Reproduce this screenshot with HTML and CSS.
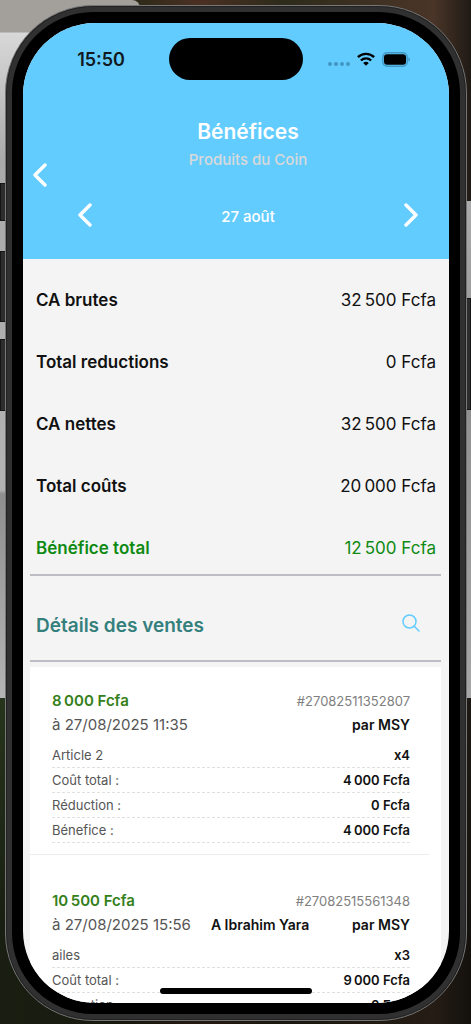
FILE: index.html
```html
<!DOCTYPE html>
<html lang="fr">
<head>
<meta charset="utf-8">
<meta name="viewport" content="width=device-width, initial-scale=1">
<title>Bénéfices</title>
<link rel="stylesheet" href="styles.css">
</head>
<body>
<div class="desktop">
  <div class="window window-left"></div>
  <div class="window window-right"></div>
  <span class="key key-action"></span>
  <span class="key key-up"></span>
  <span class="key key-down"></span>
  <span class="key key-power"></span>
  <div class="phone">
    <div class="screen">
      <header class="header">
        <div class="status">
          <span class="time">15:50</span>
          <span class="island"></span>
          <span class="signals">
            <svg width="22" height="18" viewBox="0 0 22 18" fill="#4197c2"><circle cx="2" cy="14" r="2"/><circle cx="8" cy="14" r="2"/><circle cx="14" cy="14" r="2"/><circle cx="20" cy="14" r="2"/></svg>
            <svg width="18" height="14" viewBox="0 0 18 14" fill="none" stroke="#000" stroke-width="2.4"><path d="M.9 5.2a11.6 11.6 0 0 1 16.2 0"/><path d="M3.9 8.5a7.3 7.3 0 0 1 10.2 0"/><path d="M9 13.8 6.2 11a4 4 0 0 1 5.6 0z" fill="#000" stroke="none"/></svg>
            <svg width="28" height="15" viewBox="0 0 28 15"><rect x=".8" y=".8" width="24.4" height="13.4" rx="4.4" fill="none" stroke="#4197c2" stroke-width="1.4"/><rect x="2" y="2.2" width="22" height="10.6" rx="3"/><path d="M26.4 5.2q1.6.8 1.6 2.3t-1.6 2.3z" fill="#4197c2"/></svg>
          </span>
        </div>
        <div class="heading">
          <button class="icon-button back" aria-label="Retour"><svg width="14" height="24" viewBox="0 0 14 24"><path d="M12 2 2 12l10 10"/></svg></button>
          <div class="heading-main">
            <h1 class="title">Bénéfices</h1>
            <p class="shop">Produits du Coin</p>
            <nav class="days">
              <button class="icon-button" aria-label="Jour précédent"><svg width="14" height="24" viewBox="0 0 14 24"><path d="M12 2 2 12l10 10"/></svg></button>
              <span class="day">27 août</span>
              <button class="icon-button" aria-label="Jour suivant"><svg width="14" height="24" viewBox="0 0 14 24"><path d="m2 2 10 10L2 22"/></svg></button>
            </nav>
          </div>
        </div>
      </header>
      <main class="content">
        <dl class="summary">
          <div class="line"><dt>CA brutes</dt><dd>32&#8239;500 Fcfa</dd></div>
          <div class="line"><dt>Total reductions</dt><dd>0 Fcfa</dd></div>
          <div class="line"><dt>CA nettes</dt><dd>32&#8239;500 Fcfa</dd></div>
          <div class="line"><dt>Total coûts</dt><dd>20&#8239;000 Fcfa</dd></div>
          <div class="line profit"><dt>Bénéfice total</dt><dd>12&#8239;500 Fcfa</dd></div>
        </dl>
        <div class="details-bar">
          <h2 class="details-title">Détails des ventes</h2>
          <button class="icon-button search" aria-label="Rechercher"><svg width="18" height="18" viewBox="0 0 18 18"><circle cx="7.5" cy="7.5" r="6.5"/><path d="m12 12 5 5"/></svg></button>
        </div>
        <div class="sales">
          <article class="sale">
            <div class="sale-row"><strong class="amount">8&#8239;000 Fcfa</strong><span class="number">#27082511352807</span></div>
            <div class="sale-row"><span class="date">à 27/08/2025 11:35</span><strong class="seller">par MSY</strong></div>
            <dl class="items">
              <div class="item"><dt>Article 2</dt><dd>x4</dd></div>
              <div class="item"><dt>Coût total :</dt><dd>4&#8239;000 Fcfa</dd></div>
              <div class="item"><dt>Réduction :</dt><dd>0 Fcfa</dd></div>
              <div class="item"><dt>Bénefice :</dt><dd>4&#8239;000 Fcfa</dd></div>
            </dl>
          </article>
          <article class="sale">
            <div class="sale-row"><strong class="amount">10&#8239;500 Fcfa</strong><span class="number">#27082515561348</span></div>
            <div class="sale-row"><span class="date">à 27/08/2025 15:56</span><strong class="client">A Ibrahim Yara</strong><strong class="seller">par MSY</strong></div>
            <dl class="items">
              <div class="item"><dt>ailes</dt><dd>x3</dd></div>
              <div class="item"><dt>Coût total :</dt><dd>9&#8239;000 Fcfa</dd></div>
              <div class="item"><dt>Réduction :</dt><dd>0 Fcfa</dd></div>
            </dl>
          </article>
        </div>
      </main>
      <span class="home"></span>
    </div>
  </div>
</div>
</body>
</html>
```
FILE: styles.css
```css
* { box-sizing: border-box; }
body, h1, h2, p, dl, dd { margin: 0; }
body { font-family: Inter, "Liberation Sans", sans-serif; color: #111; }

.desktop {
  position: relative;
  height: 100vh;
  padding: 5px 4px 3px 5px;
  overflow: hidden;
  background:
    linear-gradient(#0000 60%, #0c0b0899 90%),
    linear-gradient(90deg, #2c3d20, #2b2a18 28%, #4b3022 42%, #2d2b1b 60%, #4a3528 92%, #1f1a15);
}
.window { position: absolute; background: #aaa; }
.window-left {
  top: 0; left: 0; width: 140px; height: 698px;
  border-radius: 0 8px 0 0;
  background: linear-gradient(#a3a09c 0 32px, #d8d8d8 33px, #aaa 160px, #b3b3b3 490px, #8f8f8f 494px, #b4b4b4);
}
.window-right { top: 201px; right: 0; width: 30px; height: 497px; background: linear-gradient(#aaa, #8f8f8f 40%, #a6a6a6); }

.key { position: absolute; width: 8px; background: #2d2d2d; border: 1px solid #151515; }
.key-action { left: 0; top: 183px; height: 38px; }
.key-up { left: 0; top: 251px; height: 71px; }
.key-down { left: 0; top: 339px; height: 72px; }
.key-power { right: 0; top: 298px; height: 112px; }

.phone {
  position: relative;
  height: 100%;
  padding: 17px;
  border: 1px solid #777;
  border-radius: 88px;
  background: #000;
  box-shadow: inset 0 0 0 1px #222, inset 0 0 0 6px #303030;
}
.screen {
  position: relative;
  height: 100%;
  overflow: hidden;
  border-radius: 72px;
  background: #f4f4f4;
}

.header { background: #63ccff; padding-bottom: 28px; color: #fff; }
.status {
  display: grid;
  grid-template-columns: 1fr 134px 1fr;
  align-items: center;
  padding-top: 15px;
  color: #101820;
}
.time { padding: 2px 44px 0 0; text-align: right; font-size: 18px; font-weight: 600; line-height: 22px; }
.island { height: 42px; border-radius: 21px; background: #000; }
.signals { display: flex; align-items: center; gap: 7px; padding-left: 25px; }

.heading { display: flex; align-items: center; padding-top: 38px; }
.heading-main { flex: 1; }
.icon-button { display: flex; padding: 0; border: 0; background: none; }
.icon-button svg { fill: none; stroke: #fff; stroke-width: 3.4; stroke-linecap: round; stroke-linejoin: round; }
.back { width: 24px; padding-left: 10px; }
.title { text-align: center; font-size: 21px; font-weight: 600; line-height: 28px; }
.shop { padding-top: 3px; text-align: center; color: #d9d9d9; font-size: 15px; font-weight: 500; line-height: 22px; }
.days { display: flex; align-items: center; justify-content: space-between; padding: 32px 31px 4px; }
.day { padding-top: 4px; font-size: 15px; font-weight: 500; line-height: 20px; }

.content { padding: 0 8px 0 7px; }
.summary {
  display: grid;
  gap: 40px;
  padding: 30px 5px 15px 6px;
  border-bottom: 2px solid #bcbcc4;
}
.line { display: flex; justify-content: space-between; font-size: 17px; line-height: 22px; }
.line dt { font-weight: 600; }
.profit { color: #0f8a12; }
.details-bar {
  display: flex;
  align-items: center;
  justify-content: space-between;
  height: 86px;
  padding: 16px 21px 0 6px;
  border-bottom: 2px solid #bcbcc4;
}
.details-title { color: #34807d; font-size: 19px; font-weight: 600; line-height: 26px; }
.search { padding-bottom: 6px; }
.search svg { stroke: #63ccff; stroke-width: 1.5; }

.sales { display: grid; gap: 12px; margin-top: 5px; background: #fff; }
.sale { margin-right: 12px; padding: 22px 19px 11px 22px; border-bottom: 1px solid #ececec; }
.sale-row { display: flex; line-height: 24px; }
.amount { color: #34801a; font-size: 15px; font-weight: 600; }
.number { margin-left: auto; color: #808080; font-size: 13px; }
.date { color: #555; font-size: 15px; }
.client { margin-left: 20px; font-size: 14px; font-weight: 600; }
.seller { margin-left: auto; font-size: 14px; font-weight: 600; }
.items { padding-top: 6px; }
.item { display: flex; justify-content: space-between; border-bottom: 1px dashed #e0e0e0; font-size: 13px; line-height: 24px; }
.item dt { color: #555; }
.item dd { font-weight: 600; }

.home { position: absolute; bottom: 9px; left: 50%; width: 152px; height: 6px; margin-left: -76px; border-radius: 3px; background: #000; }
```
